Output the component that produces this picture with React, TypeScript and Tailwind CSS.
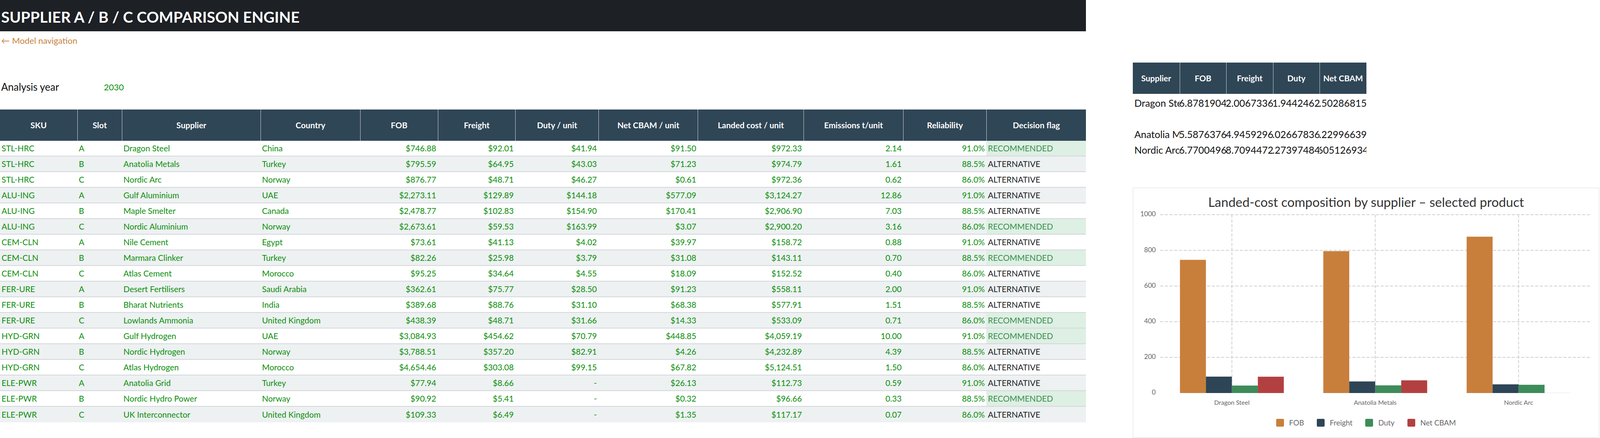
import React from 'react';

type Row = string[];

const headers = [
  'SKU',
  'Slot',
  'Supplier',
  'Country',
  'FOB',
  'Freight',
  'Duty / unit',
  'Net CBAM / unit',
  'Landed cost / unit',
  'Emissions t/unit',
  'Reliability',
  'Decision flag',
];

const rows: Row[] = [
  ['STL-HRC', 'A', 'Dragon Steel', 'China', '$746.88', '$92.01', '$41.94', '$91.50', '$972.33', '2.14', '91.0%', 'RECOMMENDED'],
  ['STL-HRC', 'B', 'Anatolia Metals', 'Turkey', '$795.59', '$64.95', '$43.03', '$71.23', '$974.79', '1.61', '88.5%', 'ALTERNATIVE'],
  ['STL-HRC', 'C', 'Nordic Arc', 'Norway', '$876.77', '$48.71', '$46.27', '$0.61', '$972.36', '0.62', '86.0%', 'ALTERNATIVE'],
  ['ALU-ING', 'A', 'Gulf Aluminium', 'UAE', '$2,273.11', '$129.89', '$144.18', '$577.09', '$3,124.27', '12.86', '91.0%', 'ALTERNATIVE'],
  ['ALU-ING', 'B', 'Maple Smelter', 'Canada', '$2,478.77', '$102.83', '$154.90', '$170.41', '$2,906.90', '7.03', '88.5%', 'ALTERNATIVE'],
  ['ALU-ING', 'C', 'Nordic Aluminium', 'Norway', '$2,673.61', '$59.53', '$163.99', '$3.07', '$2,900.20', '3.16', '86.0%', 'RECOMMENDED'],
  ['CEM-CLN', 'A', 'Nile Cement', 'Egypt', '$73.61', '$41.13', '$4.02', '$39.97', '$158.72', '0.88', '91.0%', 'ALTERNATIVE'],
  ['CEM-CLN', 'B', 'Marmara Clinker', 'Turkey', '$82.26', '$25.98', '$3.79', '$31.08', '$143.11', '0.70', '88.5%', 'RECOMMENDED'],
  ['CEM-CLN', 'C', 'Atlas Cement', 'Morocco', '$95.25', '$34.64', '$4.55', '$18.09', '$152.52', '0.40', '86.0%', 'ALTERNATIVE'],
  ['FER-URE', 'A', 'Desert Fertilisers', 'Saudi Arabia', '$362.61', '$75.77', '$28.50', '$91.23', '$558.11', '2.00', '91.0%', 'ALTERNATIVE'],
  ['FER-URE', 'B', 'Bharat Nutrients', 'India', '$389.68', '$88.76', '$31.10', '$68.38', '$577.91', '1.51', '88.5%', 'ALTERNATIVE'],
  ['FER-URE', 'C', 'Lowlands Ammonia', 'United Kingdom', '$438.39', '$48.71', '$31.66', '$14.33', '$533.09', '0.71', '86.0%', 'RECOMMENDED'],
  ['HYD-GRN', 'A', 'Gulf Hydrogen', 'UAE', '$3,084.93', '$454.62', '$70.79', '$448.85', '$4,059.19', '10.00', '91.0%', 'RECOMMENDED'],
  ['HYD-GRN', 'B', 'Nordic Hydrogen', 'Norway', '$3,788.51', '$357.20', '$82.91', '$4.26', '$4,232.89', '4.39', '88.5%', 'ALTERNATIVE'],
  ['HYD-GRN', 'C', 'Atlas Hydrogen', 'Morocco', '$4,654.46', '$303.08', '$99.15', '$67.82', '$5,124.51', '1.50', '86.0%', 'ALTERNATIVE'],
  ['ELE-PWR', 'A', 'Anatolia Grid', 'Turkey', '$77.94', '$8.66', '-', '$26.13', '$112.73', '0.59', '91.0%', 'ALTERNATIVE'],
  ['ELE-PWR', 'B', 'Nordic Hydro Power', 'Norway', '$90.92', '$5.41', '-', '$0.32', '$96.66', '0.33', '88.5%', 'RECOMMENDED'],
  ['ELE-PWR', 'C', 'UK Interconnector', 'United Kingdom', '$109.33', '$6.49', '-', '$1.35', '$117.17', '0.07', '86.0%', 'ALTERNATIVE'],
];

const sideRows = [
  ['Dragon Steel', '6.8781904', '2.0067336', '1.9442462', '.50286815'],
  ['Anatolia Metals', '5.5876376', '4.9459296', '.02667836', '.22996639'],
  ['Nordic Arc', '6.7700496', '8.7094472', '.27397484', '605126934'],
];

const chartData = [
  { name: 'Dragon Steel', v: [746.88, 92.01, 41.94, 91.5] },
  { name: 'Anatolia Metals', v: [795.59, 64.95, 43.03, 71.23] },
  { name: 'Nordic Arc', v: [876.77, 48.71, 46.27, 0.61] },
];

const seriesColors = ['#c87f3c', '#2e4556', '#3d8c5a', '#b34040'];
const seriesNames = ['FOB', 'Freight', 'Duty', 'Net CBAM'];

const MAIN_COLS =
  'grid grid-cols-[223fr_129fr_400fr_288fr_224fr_224fr_240fr_287fr_305fr_288fr_240fr_288fr]';

function MainTable() {
  return (
    <div className="w-full text-[21px]">
      <div className={MAIN_COLS + ' h-[80px] bg-[#2f4656]'}>
        {headers.map((h, i) => (
          <div
            key={h}
            className={
              'flex items-center justify-center font-bold text-white whitespace-nowrap ' +
              (i > 0 ? 'border-l border-[#cdd4d9]' : '')
            }
          >
            {h}
          </div>
        ))}
      </div>
      {rows.map((r, ri) => (
        <div
          key={ri}
          className={
            MAIN_COLS +
            ' h-[40px] ' +
            (ri < rows.length - 1 ? 'border-b-2 border-[#d3d7db] ' : '') +
            (ri % 2 === 1 ? 'bg-[#edf1f2]' : 'bg-white')
          }
        >
          {r.map((c, ci) => {
            if (ci === 11) {
              const rec = c === 'RECOMMENDED';
              return (
                <div
                  key={ci}
                  className={
                    'flex items-center pl-[4px] whitespace-nowrap ' +
                    (rec ? 'bg-[#deefe3] text-[#3a9150]' : 'text-[#222222]')
                  }
                >
                  {c}
                </div>
              );
            }
            const right = ci >= 4;
            return (
              <div
                key={ci}
                className={
                  'flex items-center whitespace-nowrap text-[#0e8f0e] ' +
                  (right ? 'justify-end pr-[4px]' : 'pl-[4px]')
                }
              >
                {c}
              </div>
            );
          })}
        </div>
      ))}
    </div>
  );
}

function SideTable() {
  return (
    <div className="w-[50.04%]">
      <div className="grid grid-cols-5 h-[80px] bg-[#2f4656] text-[21px]">
        {['Supplier', 'FOB', 'Freight', 'Duty', 'Net CBAM'].map((h, i) => (
          <div
            key={h}
            className={
              'flex items-center justify-center font-bold text-white whitespace-nowrap ' +
              (i > 0 ? 'border-l border-[#cdd4d9]' : '')
            }
          >
            {h}
          </div>
        ))}
      </div>
      {sideRows.map((r, ri) => (
        <div
          key={ri}
          className={
            'grid grid-cols-5 text-[25px] leading-[30px] text-[#111111] ' +
            (ri === 0 ? 'h-[83px] items-start pt-[8px]' : 'h-[40px] items-center')
          }
        >
          {r.map((c, ci) => (
            <div
              key={ci}
              className={
                'flex overflow-hidden whitespace-nowrap ' + (ci === 0 ? 'justify-start pl-[4px]' : 'justify-center')
              }
            >
              <span className="shrink-0">{c}</span>
            </div>
          ))}
        </div>
      ))}
    </div>
  );
}

const W = 1345;
const pct = (v: number) => `${((v / W) * 100).toFixed(3)}%`;

function Chart() {
  const x0 = 78;
  const cat = 414;
  const y0 = 471;
  const scale = 0.456;
  const ticks = [1000, 800, 600, 400, 200, 0];
  return (
    <div className="mt-[77px] w-full h-[639px] border border-[#dddddd] flex flex-col">
      <div className="h-[53px] pt-[15px] text-center text-[33px] leading-[40px] text-[#333333] whitespace-nowrap">
        Landed-cost composition by supplier – selected product
      </div>
      <svg width="100%" height="520" className="block">
        {ticks.map((t) => {
          const y = y0 - t * scale;
          return (
            <g key={t}>
              {t > 0 && (
                <line
                  x1={pct(x0)}
                  x2={pct(x0 + cat * 3)}
                  y1={y}
                  y2={y}
                  stroke="#d0d0d0"
                  strokeWidth="2"
                  strokeDasharray="8 4"
                />
              )}
              <text
                x={pct(65)}
                y={y}
                textAnchor="end"
                dominantBaseline="middle"
                fontSize="17"
                fill="#666666"
                fontFamily="Lato, sans-serif"
              >
                {t}
              </text>
            </g>
          );
        })}
        {chartData.map((d, k) => (
          <line
            key={'v' + k}
            x1={pct(x0 + cat * k + cat / 2)}
            x2={pct(x0 + cat * k + cat / 2)}
            y1={15}
            y2={y0}
            stroke="#d0d0d0"
            strokeWidth="2"
            strokeDasharray="8 4"
          />
        ))}
        {chartData.map((d, k) =>
          d.v.map((v, i) => {
            const h = Math.max(v * scale, 0.6);
            return (
              <rect
                key={k + '-' + i}
                x={pct(x0 + cat * k + 57 + 75 * i)}
                y={y0 - h}
                width={pct(75)}
                height={h}
                fill={seriesColors[i]}
                opacity={v < 1 ? 0.25 : 1}
              />
            );
          })
        )}
        {chartData.map((d, k) => (
          <text
            key={'l' + k}
            x={pct(x0 + cat * k + cat / 2)}
            y={497}
            textAnchor="middle"
            dominantBaseline="middle"
            fontSize="16"
            fill="#666666"
            fontFamily="Lato, sans-serif"
          >
            {d.name}
          </text>
        ))}
      </svg>
      <div className="mt-[17px] flex justify-center items-center gap-[33px] h-[20px]">
        {seriesNames.map((n, i) => (
          <div key={n} className="flex items-center gap-[13px]">
            <div
              className={
                'w-[20px] h-[20px] rounded-[3px] ' +
                (i === 0 ? 'bg-[#c87f3c]' : i === 1 ? 'bg-[#2e4556]' : i === 2 ? 'bg-[#3d8c5a]' : 'bg-[#b34040]')
              }
            />
            <span className="text-[19px] leading-[20px] text-[#666666]">{n}</span>
          </div>
        ))}
      </div>
    </div>
  );
}

export default function App() {
  return (
    <div className="font-['Lato',sans-serif] bg-white w-full h-[1120px] flex overflow-hidden">
      <div className="w-[67.879%] shrink-0 flex flex-col">
        <div className="h-[80px] bg-[#1d2025] flex items-center pt-[6px] pl-[3px]">
          <span className="text-white font-bold text-[39px] leading-[50px] whitespace-nowrap">
            SUPPLIER A / B / C COMPARISON ENGINE
          </span>
        </div>
        <div className="mt-[11px] h-[26px] flex items-center text-[22px] leading-[26px] text-[#c8803c] pl-[3px]">
          ← Model navigation
        </div>
        <div className="mt-[91px] h-[29px] flex items-center text-[26px] leading-[29px] pl-[3px]">
          <span className="w-[9.47%] text-[#111111] whitespace-nowrap">Analysis year</span>
          <span className="text-[#0e8f0e] text-[22px]">2030</span>
        </div>
        <div className="mt-[43px]">
          <MainTable />
        </div>
      </div>
      <div className="ml-[2.922%] w-[29.156%] shrink-0 pt-[160px] flex flex-col">
        <SideTable />
        <Chart />
      </div>
    </div>
  );
}
